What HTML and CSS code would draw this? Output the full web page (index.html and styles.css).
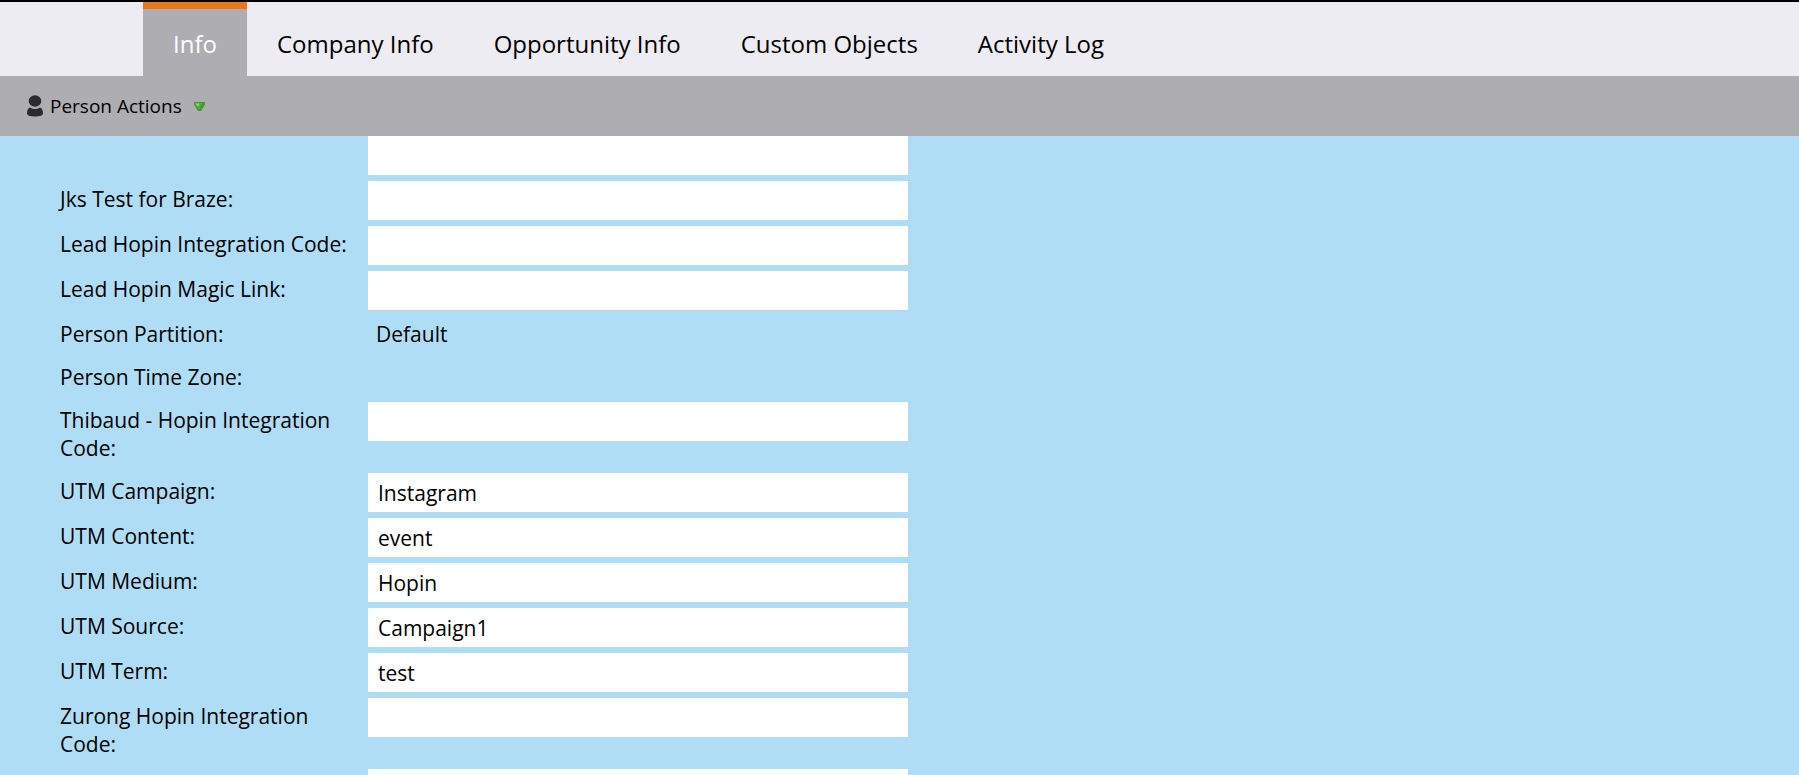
FILE: index.html
```html
<!DOCTYPE html>
<html lang="en">

<head>
	<meta charset="utf-8">
	<title>Person Info</title>
	<link rel="stylesheet" href="styles.css">
</head>

<body>
	<nav class="tabs">
		<a href="#info" class="tab active">Info</a>
		<a href="#company" class="tab">Company Info</a>
		<a href="#opportunity" class="tab">Opportunity Info</a>
		<a href="#objects" class="tab">Custom Objects</a>
		<a href="#activity" class="tab">Activity Log</a>
	</nav>
	<div class="toolbar">
		<button type="button" class="actions">
			<svg class="person" width="16" height="22" viewBox="0 0 16 22">
				<ellipse cx="8" cy="6" rx="6.300" ry="5.800" fill="#2b2b2b" />
				<path d="M3 12.500q5 3 10 0q3 1 3 6q0 3-8 3t-8-3q0-5 3-6z" fill="#2b2b2b" />
			</svg>
			<span>Person Actions</span>
			<svg class="arrow" width="11" height="9" viewBox="0 0 11 9">
				<path d="M0 0h11v2.500L7 9H4L0 2.500z" fill="#4b9238" />
				<path d="M1 1h7L5 7L1 2.500z" fill="#55b535" />
				<path d="M2 1.500h3v2H3z" fill="#8be06c" />
			</svg>
		</button>
	</div>
	<form class="fields">
		<div class="row">
			<span></span>
			<input type="text" class="value" aria-label="Field">
		</div>
		<div class="row">
			<label for="braze">Jks Test for Braze:</label>
			<input type="text" class="value" id="braze">
		</div>
		<div class="row">
			<label for="leadcode">Lead Hopin Integration Code:</label>
			<input type="text" class="value" id="leadcode">
		</div>
		<div class="row">
			<label for="magic">Lead Hopin Magic Link:</label>
			<input type="text" class="value" id="magic">
		</div>
		<div class="row">
			<label for="partition">Person Partition:</label>
			<output class="static" id="partition">Default</output>
		</div>
		<div class="row">
			<label for="timezone">Person Time Zone:</label>
			<output class="static" id="timezone"></output>
		</div>
		<div class="row">
			<label for="thibaud">Thibaud - Hopin Integration Code:</label>
			<input type="text" class="value" id="thibaud">
		</div>
		<div class="row">
			<label for="campaign">UTM Campaign:</label>
			<input type="text" class="value" id="campaign" value="Instagram">
		</div>
		<div class="row">
			<label for="content">UTM Content:</label>
			<input type="text" class="value" id="content" value="event">
		</div>
		<div class="row">
			<label for="medium">UTM Medium:</label>
			<input type="text" class="value" id="medium" value="Hopin">
		</div>
		<div class="row">
			<label for="source">UTM Source:</label>
			<input type="text" class="value" id="source" value="Campaign1">
		</div>
		<div class="row">
			<label for="term">UTM Term:</label>
			<input type="text" class="value" id="term" value="test">
		</div>
		<div class="row">
			<label for="zurong">Zurong Hopin Integration Code:</label>
			<input type="text" class="value" id="zurong">
		</div>
		<div class="row">
			<span></span>
			<input type="text" class="value" aria-label="Field">
		</div>
	</form>
</body>

</html>
```

FILE: styles.css
```css
* {
	margin: 0px;
	padding: 0px;
	box-sizing: border-box;
}

body {
	display: flex;
	flex-direction: column;
	height: 100vh;
	overflow: hidden;
	background: #b0ddf6;
	color: #000;
	font-family: "Open Sans", sans-serif;
	font-size: 21px;
}

.tabs {
	display: flex;
	flex: none;
	padding-left: 143px;
	background: #edecf2;
	border-top: 2px solid #000;
}

.tab {
	padding: 18px 30px 16px;
	border-top: 7px solid transparent;
	color: #000;
	font-size: 24px;
	line-height: 33px;
	text-decoration: none;
}

.active {
	background: #aeadb2;
	border-top-color: #e8761a;
	color: #fff;
}

.toolbar {
	display: flex;
	flex: none;
	align-items: center;
	height: 60px;
	padding-left: 27px;
	background: #aeadb2;
}

.actions {
	display: flex;
	align-items: center;
	border: none;
	background: transparent;
	color: #000;
	font-family: inherit;
	font-size: 19px;
	line-height: 26px;
	cursor: pointer;
}

.person {
	margin-right: 7px;
}

.arrow {
	margin-left: 12px;
}

.fields {
	flex: 1;
	overflow: hidden;
	padding-left: 60px;
}

.row {
	display: grid;
	grid-template-columns: 298px minmax(0, 540px);
	column-gap: 10px;
	align-items: start;
	margin-bottom: 6px;
}

label {
	padding: 4px 0px 5px;
	line-height: 28px;
}

.value {
	width: 100%;
	height: 39px;
	padding: 0px 10px;
	border: none;
	background: #fff;
	color: #000;
	font-family: inherit;
	font-size: 21px;
}

.static {
	padding: 4px 8px 5px;
	line-height: 28px;
}
```
